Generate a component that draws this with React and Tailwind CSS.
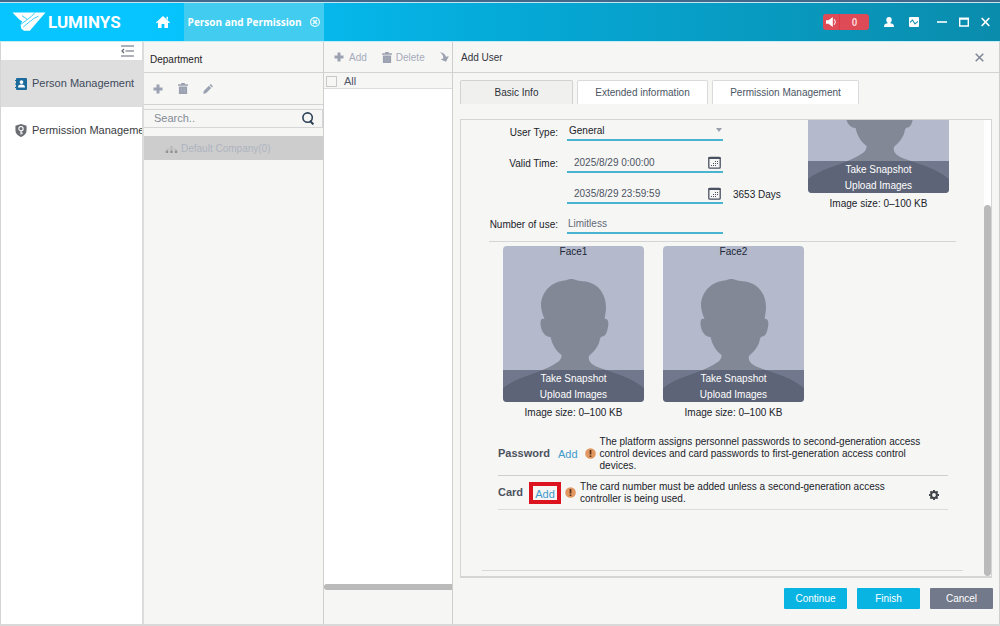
import React from "react";

const focusRing = "focus-visible:outline focus-visible:outline-1 focus-visible:outline-[#18b0d8]";

function Logo() {
  return (
    <div className="flex h-full shrink-0 items-center pl-3">
      <svg viewBox="0 0 34 20" className="h-5 w-[34px]" aria-hidden="true">
        <path d="M0.5 0.5H33.5L17.8 18.8H12L9.2 16.6L8.6 12.4L10.2 9.4L7 7.2Z" fill="#fff" />
        <path d="M23 0.5L19.4 4.4L8.6 12.6M10 3.6L15 7.2M26.5 4.2L21.6 6.6L11.2 15" fill="none" stroke="#06c2fb" strokeWidth="0.8" />
      </svg>
      <span className="ml-0.5 font-['Roboto',sans-serif] text-[17px] leading-5 font-bold text-white">LUMINYS</span>
    </div>
  );
}

function Header() {
  return (
    <header className="flex h-10 shrink-0 items-center border-t border-b border-t-[#c3e6f2] border-b-[#c5edf6] bg-linear-to-r from-[#06c5ff] from-15% via-[#05aad8] via-50% to-[#0a8cac]">
      <Logo />
      <button type="button" aria-label="Home" className={`ml-[35px] shrink-0 ${focusRing}`}>
        <svg viewBox="0 0 14 12" className="h-3 w-3.5" fill="#fff" aria-hidden="true">
          <path d="M7 0L14 6.4L13.2 7.2L12 6.5V12H8.4V8H5.6V12H2V6.5L0.8 7.2L0 6.4Z" />
          <path d="M10.5 0.8H12V4L10.5 2.7Z" />
        </svg>
      </button>
      <div className="ml-3.5 flex h-full shrink-0 items-center gap-2 bg-[#42cdf0] px-1">
        <span className="font-['Open_Sans','Noto_Sans',sans-serif] text-[10px] font-bold whitespace-nowrap text-white">Person and Permission</span>
        <button type="button" aria-label="Close tab" className={focusRing}>
          <svg viewBox="0 0 10 10" className="size-2.5" aria-hidden="true">
            <circle cx="5" cy="5" r="4.4" fill="none" stroke="#e8fbff" strokeWidth="1.2" />
            <path d="M3 3L7 7M7 3L3 7" stroke="#e8fbff" strokeWidth="1.6" />
          </svg>
        </button>
      </div>
      <div className="ml-auto flex shrink-0 items-center pr-2.5">
        <button type="button" aria-label="Alarms" className={`flex h-4 w-[46px] items-center rounded-[3px] bg-[#de4a55] text-[10px] font-bold text-[#ffd5d8] ${focusRing}`}>
          <span className="flex h-full w-[17px] items-center justify-center border-r border-[#e23a45]">
            <svg viewBox="0 0 11 10" className="h-2.5 w-[11px]" aria-hidden="true">
              <path d="M0 3.2H2.5L6.8 0V10L2.5 6.8H0Z" fill="#fff" />
              <path d="M8.2 2.2Q10.6 5 8.2 7.8" fill="none" stroke="#fff" />
            </svg>
          </span>
          <span className="flex-1 text-center">0</span>
        </button>
        <button type="button" aria-label="Account" className={`ml-[15px] ${focusRing}`}>
          <svg viewBox="0 0 10 10" className="size-2.5" fill="#fff" aria-hidden="true">
            <path d="M5 0C6.8 0 7.7 1 7.7 2.7C7.7 4.2 7 5.2 6.4 5.7V6.2L9 7Q9.8 7.5 10 10H0Q0.2 7.5 1 7L3.6 6.2V5.7C3 5.2 2.3 4.2 2.3 2.7C2.3 1 3.2 0 5 0Z" />
          </svg>
        </button>
        <button type="button" aria-label="System status" className={`ml-[15px] ${focusRing}`}>
          <svg viewBox="0 0 10 10" className="size-2.5" aria-hidden="true">
            <rect width="10" height="10" rx="1" fill="#fff" />
            <path d="M1 5.4L3.5 3L6 7L9 4.4" fill="none" stroke="#158fae" strokeWidth="1.1" />
          </svg>
        </button>
        <button type="button" aria-label="Minimize" className={`ml-[18px] ${focusRing}`}>
          <svg viewBox="0 0 10 10" className="size-2.5" aria-hidden="true"><path d="M0 5H10" stroke="#fff" strokeWidth="1.6" /></svg>
        </button>
        <button type="button" aria-label="Maximize" className={`ml-3 ${focusRing}`}>
          <svg viewBox="0 0 10 10" className="size-2.5" aria-hidden="true"><path d="M0.7 1.5H9.3V9H0.7Z" fill="none" stroke="#fff" strokeWidth="1.4" /><path d="M0 1.7H10" stroke="#fff" strokeWidth="2" /></svg>
        </button>
        <button type="button" aria-label="Close" className={`ml-3 ${focusRing}`}>
          <svg viewBox="0 0 9 10" className="h-2.5 w-[9px]" aria-hidden="true"><path d="M0.7 1L8.3 9M8.3 1L0.7 9" stroke="#fff" strokeWidth="1.7" /></svg>
        </button>
      </div>
    </header>
  );
}

function Sidebar() {
  return (
    <nav className="w-[142px] shrink-0 overflow-hidden border-l border-[#d4d4d4] bg-white">
      <div className="flex h-[18px] items-center justify-end pr-2">
        <button type="button" aria-label="Collapse menu" className={focusRing}>
          <svg viewBox="0 0 13 12" className="h-3 w-[13px]" fill="none" stroke="#5f6570" strokeWidth="1.2" aria-hidden="true">
            <path d="M0 1H13M4.5 6H13M0 11H13M3 4L1 6L3 8" />
          </svg>
        </button>
      </div>
      <a href="#person" aria-current="page" className="flex h-[47px] items-center gap-[5px] bg-[#dedede] pl-3.5 text-[11px] whitespace-nowrap text-[#3d4a5c]">
        <svg viewBox="0 0 12 12" className="size-3 shrink-0" aria-hidden="true">
          <rect x="1" width="11" height="12" rx="1" fill="#1d6a9c" />
          <path d="M0 2.5H2M0 6H2M0 9.5H2" stroke="#1d6a9c" />
          <circle cx="6.5" cy="4.1" r="1.9" fill="#fff" />
          <path d="M3 9.6C3 7.2 4.6 6.6 6.5 6.6S10 7.2 10 9.6Z" fill="#fff" />
        </svg>
        Person Management
      </a>
      <a href="#permission" className="flex h-[47px] items-center gap-[5px] pl-3.5 text-[11px] whitespace-nowrap text-[#3a3d42]">
        <svg viewBox="0 0 12 14" className="h-[13px] w-3 shrink-0" aria-hidden="true">
          <path d="M6 0L12 1.8V6.5C12 10.4 9.5 12.6 6 14C2.5 12.6 0 10.4 0 6.5V1.8Z" fill="#6a6e73" />
          <circle cx="6" cy="5" r="2.3" fill="none" stroke="#fff" strokeWidth="1.2" />
          <path d="M6 7V11.4M6 9.8H7.8" stroke="#fff" strokeWidth="1.2" />
        </svg>
        Permission Management
      </a>
    </nav>
  );
}

function PlusIcon() {
  return <svg viewBox="0 0 10 10" className="size-2.5 shrink-0" aria-hidden="true"><path d="M5 0.5V9.5M0.5 5H9.5" stroke="#9ba1b0" strokeWidth="3" /></svg>;
}

function TrashIcon() {
  return (
    <svg viewBox="0 0 10 11" className="h-[11px] w-2.5 shrink-0" aria-hidden="true">
      <path d="M3.2 0H6.8V1.2H10V2.7H0V1.2H3.2ZM0.9 3.4H9.1V11H0.9Z" fill="#9ba1b0" />
      <path d="M3.7 4.7V9.6M6.3 4.7V9.6" stroke="#b2b7c2" strokeWidth="0.6" />
    </svg>
  );
}

function Departments() {
  return (
    <aside className="w-[181px] shrink-0 border-l-2 border-[#dcdcdc] bg-[#f6f6f5]">
      <h2 className="flex h-[31px] items-center border-b border-[#d3d3d3] pt-1 pl-1.5 text-[10px] text-[#1f2226]">Department</h2>
      <div className="flex h-8 items-center gap-[15px] border-b border-[#d3d3d3] pl-[9px]">
        <button type="button" aria-label="Add department" className={focusRing}><PlusIcon /></button>
        <button type="button" aria-label="Delete department" className={focusRing}><TrashIcon /></button>
        <button type="button" aria-label="Edit department" className={focusRing}>
          <svg viewBox="0 0 10 10" className="size-2.5" fill="#9ba1b0" aria-hidden="true"><path d="M0.2 9.8L0.8 7L5.9 1.8L8.2 4.1L3 9.3ZM6.6 1.1L7.7 0L10 2.3L8.9 3.4Z" /></svg>
        </button>
      </div>
      <div className="mt-1 flex h-[19px] items-center border border-l-0 border-[#d6d6d6] pr-2 pl-2.5">
        <input aria-label="Search departments" placeholder="Search.." className="min-w-0 flex-1 bg-transparent text-[11px] outline-none placeholder:text-[#858b95]" />
        <button type="button" aria-label="Search" className={focusRing}>
          <svg viewBox="0 0 12 13" className="h-[13px] w-3" fill="none" stroke="#2e4257" aria-hidden="true"><circle cx="5.6" cy="5.6" r="4.7" strokeWidth="1.6" /><path d="M7.8 8.8L11.4 12.4" strokeWidth="2" /></svg>
        </button>
      </div>
      <ul className="mt-2">
        <li className="flex h-6 items-center gap-[3px] bg-[#cdcdcd] pl-[21px] text-[10px] text-[#aeb4c0]">
          <svg viewBox="0 0 13 9" className="h-[9px] w-[13px]" aria-hidden="true">
            <path d="M2 7V5H11V7M6.5 3V7" stroke="#b8b8b8" strokeWidth="0.8" fill="none" />
            <path d="M5.5 2H7.5V4H5.5Z" fill="#b4b4b4" />
            <path d="M0.8 6.4H3.2V9H0.8ZM5.3 6.4H7.7V9H5.3ZM9.8 6.4H12.2V9H9.8Z" fill="#929292" />
          </svg>
          Default Company(0)
        </li>
      </ul>
    </aside>
  );
}

function People() {
  return (
    <section aria-label="People" className="flex w-[129px] shrink-0 flex-col border-l border-[#cfcfcf] bg-[#f6f6f5]">
      <div className="flex h-[31px] shrink-0 items-center overflow-hidden border-b border-[#d3d3d3] pl-2.5 text-[10px] text-[#a5abba]">
        <button type="button" className={`flex items-center gap-[5px] ${focusRing}`}><PlusIcon />Add</button>
        <button type="button" className={`ml-[15px] flex items-center gap-1 ${focusRing}`}><TrashIcon />Delete</button>
        <button type="button" aria-label="Import" className={`ml-[15px] ${focusRing}`}>
          <svg viewBox="0 0 9 10" className="h-2.5 w-[9px]" aria-hidden="true"><path d="M0 0.2C3.4 0.4 5.4 2.4 6 4.8L8.8 4.2L6 9.8L0.8 7.6L3.4 6.2C3.4 3.6 2 1.6 0 0.2Z" fill="#9ba1b0" /></svg>
        </button>
      </div>
      <label className="flex h-4 shrink-0 items-center gap-[7px] border-b border-[#dcdcdc] pt-0.5 pl-0.5 text-[11px] text-[#4c5563]">
        <input type="checkbox" className="size-[11px] appearance-none border border-[#c8c8c8] bg-[#f6f6f5] checked:bg-[#18b0d8]" />
        All
      </label>
      <div className="flex-1 bg-white" />
      <div className="mb-[34px] h-1.5 shrink-0 rounded-l-full bg-[#bababa]" />
    </section>
  );
}

function Portrait({ title, action }) {
  return (
    <div className="relative h-[156px] w-[141px] shrink-0 overflow-hidden rounded-[4px] bg-[#b4bacc]">
      <svg viewBox="0 0 141 156" className="block h-[156px] w-[141px]" aria-hidden="true">
        <path d="M68 33C72 33 74 35 80 35.2C94 36 103 47 103 61C103 66 102 69 101.6 73C105 72 106 77 105 81C104 87 102 91 99 90.5C97 91 97 93 96 97C93 104 89 107 86 110C84.5 115 89 119 97 122C111 127 128 131 141 142V156H0V142C13 131 37 127 50 119C56 116 59 113 58.5 109C53 105 49 98 47.5 91C42 91 37.5 85 37.5 77C37.5 73 39 72 41.5 73C39.5 68 38 64 38 59C38.5 46 48 36 61 34.5C64 34.2 65 33 68 33Z" fill="#828896" />
      </svg>
      {title && <h3 className="absolute inset-x-0 top-0 text-center text-[10px] leading-3 text-[#202536]">{title}</h3>}
      <div className="absolute inset-x-0 bottom-0 flex h-8 flex-col items-center justify-center bg-[#454c63]/60 pt-0.5 text-[10px] leading-4 text-white">
        <button type="button" aria-label={`Take Snapshot, ${action}`} className={focusRing}>Take Snapshot</button>
        <button type="button" aria-label={`Upload Images, ${action}`} className={focusRing}>Upload Images</button>
      </div>
    </div>
  );
}

function ImageSize() {
  return <p className="pt-[3px] text-center text-[10px] leading-4 text-[#202329]">Image size: 0–100 KB</p>;
}

function CalendarIcon() {
  return (
    <svg viewBox="0 0 13 13" className="size-[13px]" aria-hidden="true">
      <rect x="0.8" y="1.3" width="11.4" height="10.9" rx="1" fill="none" stroke="#4a5160" strokeWidth="1.3" />
      <path d="M0.5 2H12.5" stroke="#4a5160" strokeWidth="2" />
      <path d="M7 5.5H8M9 5.5H10M5 7.5H6M7 7.5H8M9 7.5H10M3 9.5H4M5 9.5H6M7 9.5H8" stroke="#4a5160" strokeWidth="1" />
    </svg>
  );
}

const fieldBox = "flex w-[156px] items-center border-b-2 border-[#48b4cf]";
const rowLabel = "w-[97px] text-right whitespace-nowrap";

function DateField({ id, value, label }) {
  return (
    <div className={`${fieldBox} h-5 pr-0.5 pl-[7px]`}>
      <input id={id} aria-label={label} defaultValue={value} className="min-w-0 flex-1 bg-transparent text-[10px] text-[#4d5462] outline-none" />
      <button type="button" aria-label={`Pick date, ${label}`} className={focusRing}><CalendarIcon /></button>
    </div>
  );
}

function AlertIcon() {
  return (
    <svg viewBox="0 0 11 11" className="size-[11px] shrink-0" aria-hidden="true">
      <circle cx="5.5" cy="5.5" r="5.3" fill="#e39760" />
      <path d="M5.5 2V6.4M5.5 7.4V9" stroke="#57301c" strokeWidth="1.7" />
    </svg>
  );
}

function AddUser() {
  const tabs = "h-6 rounded-t-[2px] border border-b-0 text-[10px]";
  return (
    <main className="flex min-w-0 flex-1 flex-col border-x border-[#cfcfcf] bg-[#f6f6f5]">
      <div className="flex h-[31px] shrink-0 items-center justify-between border-b border-[#d3d3d3] pr-[15px] pl-2">
        <h1 className="text-[10px] text-[#33373e]">Add User</h1>
        <button type="button" aria-label="Close dialog" className={focusRing}>
          <svg viewBox="0 0 9 9" className="size-[9px]" aria-hidden="true"><path d="M0.7 0.7L8.3 8.3M8.3 0.7L0.7 8.3" stroke="#7f8696" strokeWidth="1.5" /></svg>
        </button>
      </div>
      <div role="tablist" className="flex shrink-0 gap-1 pt-[7px] pl-[7px]">
        <button type="button" role="tab" aria-selected="true" className={`${tabs} w-[113px] border-[#d2d2d2] bg-[#f0f0ef] text-[#2c3037]`}>Basic Info</button>
        <button type="button" role="tab" aria-selected="false" className={`${tabs} w-[131px] border-[#dadada] bg-white text-[#4b5563]`}>Extended information</button>
        <button type="button" role="tab" aria-selected="false" className={`${tabs} w-[147px] border-[#dadada] bg-white text-[#4b5563]`}>Permission Management</button>
      </div>
      <div className="mt-[15px] mr-[7px] ml-[7px] flex flex-1 border border-b-2 border-[#d5d5d5]">
        <div className="flex min-w-0 flex-1 flex-col">
          <div className="mr-[28px] ml-[28px] flex justify-between border-b border-[#d5d5d5] pr-[7px] pb-[7px]">
            <form id="user-form" className="-ml-7 text-[10px] text-[#202329]">
              <div className="flex h-[21px] items-end gap-[9px]">
                <label htmlFor="user-type" className={`${rowLabel} leading-4`}>User Type:</label>
                <div className={`${fieldBox} h-5 pr-px pl-0.5`}>
                  <select id="user-type" className="min-w-0 flex-1 appearance-none bg-transparent text-[10px] outline-none">
                    <option>General</option>
                  </select>
                  <svg viewBox="0 0 6 4" className="h-1 w-1.5" aria-hidden="true"><path d="M0 0H6L3 4Z" fill="#9aa1ad" /></svg>
                </div>
              </div>
              <div className="flex h-8 items-end gap-[9px]">
                <label htmlFor="valid-from" className={`${rowLabel} leading-[18px]`}>Valid Time:</label>
                <DateField id="valid-from" value="2025/8/29 0:00:00" label="Valid from" />
              </div>
              <div className="flex h-[31px] items-end pl-[106px]">
                <DateField id="valid-to" value="2035/8/29 23:59:59" label="Valid until" />
                <output className="ml-2.5 text-[10px] leading-[18px]">3653 Days</output>
              </div>
              <div className="flex h-[30px] items-end gap-[9px]">
                <label htmlFor="uses" className={`${rowLabel} leading-[18px]`}>Number of use:</label>
                <div className={`${fieldBox} h-5`}>
                  <input id="uses" placeholder="Limitless" className="min-w-0 flex-1 bg-transparent pl-px text-[10px] outline-none placeholder:text-[#626977]" />
                </div>
              </div>
            </form>
            <div>
              <div className="flex h-[73px] flex-col justify-end overflow-hidden"><Portrait action="profile" /></div>
              <ImageSize />
            </div>
          </div>
          <div className="mt-1 ml-[42px] flex gap-[19px]">
            <div><Portrait title="Face1" action="Face1" /><ImageSize /></div>
            <div><Portrait title="Face2" action="Face2" /><ImageSize /></div>
          </div>
          <div className="mt-[13px] mr-[36px] ml-[37px]">
            <section className="flex h-[42px] items-center border-b border-[#cfcfcf] pb-0.5">
              <h3 className="text-[11px] font-bold text-[#4d535e]">Password</h3>
              <button type="button" aria-label="Add password" className={`ml-2 pt-0.5 text-[11px] text-[#409bcc] ${focusRing}`}>Add</button>
              <span className="mr-1 ml-[7px]"><AlertIcon /></span>
              <p className="max-w-[340px] text-[10px] leading-3 text-[#202329]">The platform assigns personnel passwords to second-generation access control devices and card passwords to first-generation access control devices.</p>
            </section>
            <section className="flex h-[34px] items-center border-b border-[#dcdcdc]">
              <h3 className="text-[11px] font-bold text-[#4d535e]">Card</h3>
              <button type="button" aria-label="Add card" className={`mr-1 ml-1.5 h-[22px] w-8 border-[4px] border-[#dc1420] pt-0.5 text-[11px] leading-3 text-[#409bcc] ${focusRing}`}>Add</button>
              <AlertIcon />
              <p className="ml-1 max-w-[330px] text-[10px] leading-3 text-[#202329]">The card number must be added unless a second-generation access controller is being used.</p>
              <button type="button" aria-label="Card settings" className={`mt-1 mr-[9px] ml-auto ${focusRing}`}>
                <svg viewBox="0 0 10 10" className="size-2.5" fill="none" stroke="#3f4348" aria-hidden="true">
                  <circle cx="5" cy="5" r="2.9" strokeWidth="2" />
                  <path d="M5 0V1.6M5 8.4V10M0 5H1.6M8.4 5H10M1.4 1.4L2.6 2.6M7.4 7.4L8.6 8.6M1.4 8.6L2.6 7.4M7.4 2.6L8.6 1.4" strokeWidth="1.9" />
                </svg>
              </button>
            </section>
          </div>
          <div className="mt-auto mr-[21px] mb-[5px] ml-[21px] border-t border-[#d8d8d8]" />
        </div>
        <div className="w-[7px] shrink-0 bg-white pt-[85px]">
          <div className="h-full rounded-full bg-[#bababa]" />
        </div>
      </div>
      <div className="mt-2.5 mr-1.5 mb-[15px] flex shrink-0 justify-end gap-2.5 text-[10px] text-white">
        <button type="submit" form="user-form" className={`h-[21px] w-[63px] rounded-[1px] bg-[#09b4e3] ${focusRing}`}>Continue</button>
        <button type="submit" form="user-form" className={`h-[21px] w-[63px] rounded-[1px] bg-[#09b4e3] ${focusRing}`}>Finish</button>
        <button type="button" className={`h-[21px] w-[63px] rounded-[1px] bg-[#72798a] ${focusRing}`}>Cancel</button>
      </div>
    </main>
  );
}

export default function App() {
  return (
    <div className="flex min-h-screen flex-col border-t-2 border-b-2 border-t-[#42688a] border-b-[#d9d9d9] bg-white font-['Liberation_Sans',Arial,sans-serif]">
      <Header />
      <div className="flex flex-1">
        <Sidebar />
        <Departments />
        <People />
        <AddUser />
      </div>
    </div>
  );
}
